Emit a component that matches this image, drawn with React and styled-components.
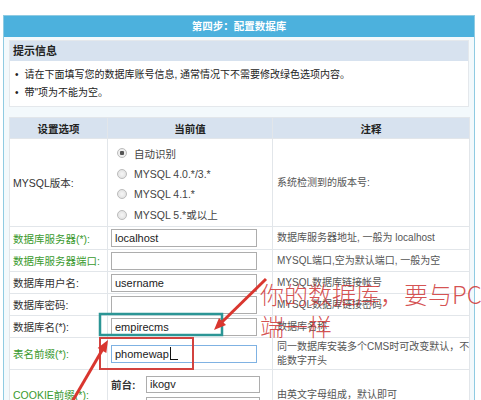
import React from "react";
import styled, { createGlobalStyle } from "styled-components";

const Global = createGlobalStyle`
  html, body { margin: 0; padding: 0; background: #fff; overflow: hidden; }
  body { font-family: "Liberation Sans", "Noto Sans CJK SC", sans-serif; font-size: 10.5px; color: #333; }
`;

const Page = styled.div`
  position: relative;
  width: 481px;
  height: 400px;
  overflow: hidden;
  padding-top: 15px;
  box-sizing: border-box;
`;

const Frame = styled.div`
  margin-left: 3px;
  width: 470px;
  border: 1px solid #8fcbe2;
  background: #f3f9fc;
`;

const TitleBar = styled.div`
  height: 21px;
  line-height: 21px;
  background: #4cb1dd;
  color: #fff;
  font-weight: bold;
  text-align: center;
  font-size: 10.5px;
`;

const Inner = styled.div`
  padding: 3px 5px 0 5px;
`;

const Info = styled.div`
  background: #fff;
  border: 1px solid #e4e8ec;
`;

const InfoHead = styled.div`
  height: 20px;
  line-height: 20px;
  background: #d7e2ef;
  padding-left: 3px;
  font-weight: bold;
  font-size: 11px;
  color: #222;
`;

const InfoList = styled.ul`
  margin: 0;
  padding: 5px 0 4px 5px;
  list-style: none;
  font-size: 10px;
  li {
    height: 18px;
    line-height: 18px;
    color: #222;
  }
  li::before {
    content: "•";
    margin-right: 6px;
  }
`;

const Table = styled.table`
  margin-top: 10px;
  width: 460px;
  border-collapse: collapse;
  background: #fff;
  table-layout: fixed;
`;

const HeadCell = styled.th`
  height: 20px;
  background: #d7e2ef;
  font-weight: bold;
  color: #222;
  text-align: center;
  padding: 0;
  border: 1px solid #e2e6ea;
`;

const Row = styled.tr`
  height: ${(p) => p.$h}px;
`;

const Label = styled.td`
  padding: 0 0 0 3px;
  border: 1px solid #e2e6ea;
  color: ${(p) => (p.$green ? "#3a9a2e" : "#333")};
  white-space: nowrap;
  overflow: hidden;
`;

const Value = styled.td`
  padding: 0 0 0 3px;
  border: 1px solid #e2e6ea;
`;

const Note = styled.td`
  padding: 0 4px;
  border: 1px solid #e2e6ea;
  color: #555;
  font-size: 10px;
  line-height: 14px;
  white-space: nowrap;
  overflow: hidden;
`;

const Radios = styled.div`
  display: flex;
  flex-direction: column;
  gap: 6.5px;
  padding: 7px 0 4px 6px;
`;

const RadioRow = styled.div`
  display: flex;
  align-items: center;
  gap: 7px;
  color: #444;
  height: 14px;
`;

const RadioDot = styled.span`
  width: 8px;
  height: 8px;
  border-radius: 50%;
  border: 1px solid #bcbcbc;
  background: ${(p) =>
    p.$on
      ? "radial-gradient(circle, #555 0 2px, #eee 2.5px)"
      : "radial-gradient(circle, #f6f6f6 0, #dcdcdc 100%)"};
  box-sizing: content-box;
`;

const Field = styled.div`
  width: 141px;
  height: 16px;
  border: 1px solid ${(p) => (p.$focus ? "#7fb2e3" : "#adadad")};
  background: #fff;
  font-size: 11px;
  padding-left: 3px;
  color: #222;
  display: flex;
  align-items: center;
`;

const Caret = styled.span`
  display: inline-block;
  width: 7px;
  height: 12px;
  border-left: 1px solid #111;
  border-bottom: 1px solid #111;
  margin-left: 1px;
`;

const Pair = styled.div`
  display: flex;
  align-items: center;
  gap: 10px;
  margin: 4px 0;
  b { font-weight: bold; color: #333; width: 25px; }
`;

const SmallField = styled(Field)`
  width: 109px;
  height: 15px;
`;

const Overlay = styled.svg`
  position: absolute;
  left: 0;
  top: 0;
  pointer-events: none;
`;

const Remark = styled.div`
  position: absolute;
  left: 260px;
  top: 278px;
  font-family: "Noto Sans CJK SC", sans-serif;
  font-size: 24px;
  line-height: 32px;
  color: rgba(206, 52, 52, 0.85);
  white-space: nowrap;
  font-weight: 300;
`;

function App() {
  return (
    <Page>
      <Global />
      <Frame>
        <TitleBar>第四步：配置数据库</TitleBar>
        <Inner>
          <Info>
            <InfoHead>提示信息</InfoHead>
            <InfoList>
              <li>请在下面填写您的数据库账号信息, 通常情况下不需要修改绿色选项内容。</li>
              <li>带"项为不能为空。</li>
            </InfoList>
          </Info>
          <Table>
            <colgroup>
              <col style={{ width: 98 }} />
              <col style={{ width: 165 }} />
              <col style={{ width: 197 }} />
            </colgroup>
            <thead>
              <tr>
                <HeadCell>设置选项</HeadCell>
                <HeadCell>当前值</HeadCell>
                <HeadCell>注释</HeadCell>
              </tr>
            </thead>
            <tbody>
              <Row $h={88}>
                <Label>MYSQL版本:</Label>
                <Value>
                  <Radios>
                    <RadioRow><RadioDot $on />自动识别</RadioRow>
                    <RadioRow><RadioDot />MYSQL 4.0.*/3.*</RadioRow>
                    <RadioRow><RadioDot />MYSQL 4.1.*</RadioRow>
                    <RadioRow><RadioDot />MYSQL 5.*或以上</RadioRow>
                  </Radios>
                </Value>
                <Note>系统检测到的版本号:</Note>
              </Row>
              <Row $h={23}>
                <Label $green>数据库服务器(*):</Label>
                <Value><Field>localhost</Field></Value>
                <Note>数据库服务器地址, 一般为 localhost</Note>
              </Row>
              <Row $h={22}>
                <Label $green>数据库服务器端口:</Label>
                <Value><Field /></Value>
                <Note>MYSQL端口,空为默认端口, 一般为空</Note>
              </Row>
              <Row $h={22}>
                <Label>数据库用户名:</Label>
                <Value><Field>username</Field></Value>
                <Note>MYSQL数据库链接帐号</Note>
              </Row>
              <Row $h={22}>
                <Label>数据库密码:</Label>
                <Value><Field /></Value>
                <Note>MYSQL数据库链接密码</Note>
              </Row>
              <Row $h={22}>
                <Label>数据库名(*):</Label>
                <Value><Field>empirecms</Field></Value>
                <Note>数据库名称</Note>
              </Row>
              <Row $h={32}>
                <Label $green>表名前缀(*):</Label>
                <Value><Field $focus>phomewap<Caret /></Field></Value>
                <Note>
                  同一数据库安装多个CMS时可改变默认，不
                  <br />
                  能数字开头
                </Note>
              </Row>
              <Row $h={50}>
                <Label $green>COOKIE前缀(*):</Label>
                <Value>
                  <Pair><b>前台:</b><SmallField>ikogv</SmallField></Pair>
                  <Pair><b>后台:</b><SmallField /></Pair>
                </Value>
                <Note>由英文字母组成，默认即可</Note>
              </Row>
            </tbody>
          </Table>
        </Inner>
      </Frame>

      <Overlay width="481" height="400" viewBox="0 0 481 400">
        <rect x="100" y="314" width="122" height="21" fill="none" stroke="#2b9595" strokeWidth="2.5" />
        <rect x="100" y="338" width="93" height="31" fill="none" stroke="#d2423f" strokeWidth="2" />
        <line x1="266" y1="279" x2="220" y2="324" stroke="#d9362f" strokeWidth="3" />
        <polygon points="214,330 226,325 219,318" fill="#d9362f" />
        <line x1="72" y1="402" x2="104" y2="347" stroke="#d9362f" strokeWidth="3" />
        <polygon points="108,340 106.3,352.9 97.7,347.9" fill="#d9362f" />
      </Overlay>
      <Remark>
        你的数据库，要与PC
        <br />
        端一样
      </Remark>
    </Page>
  );
}

export default App;
